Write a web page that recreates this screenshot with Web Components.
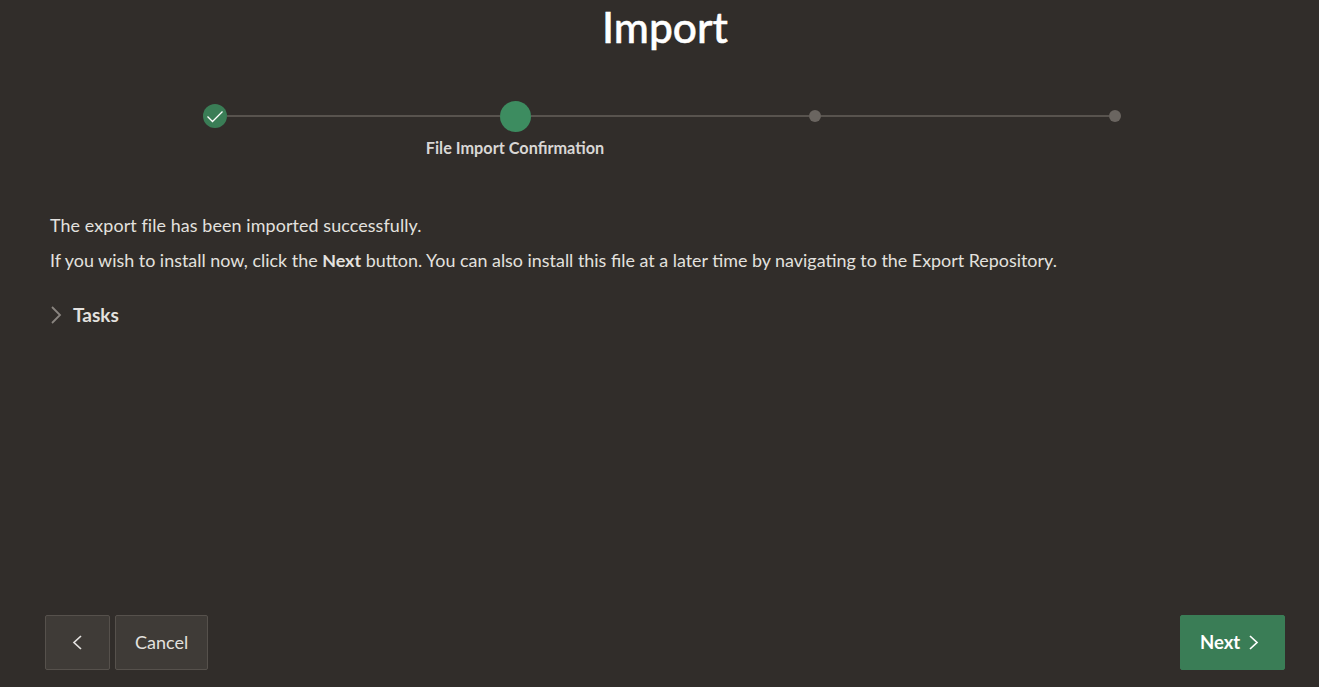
<!DOCTYPE html>
<html lang="en">
<head>
<meta charset="utf-8">
<title>Import</title>
<style>
  html, body { margin: 0; height: 100%; background: #312d2a; }
  body { font-family: Lato, "Noto Sans", sans-serif; color: #e3e1df; }
</style>
</head>
<body>
<import-page>
  <wizard-progress slot="progress"></wizard-progress>
  <p>The export file has been imported successfully.</p>
  <p>If you wish to install now, click the <b>Next</b> button. You can also install this file at a later time by navigating to the Export Repository.</p>
  <tasks-toggle slot="tasks">Tasks</tasks-toggle>
  <wizard-button slot="left" icon="prev" label="Back"></wizard-button>
  <wizard-button slot="left">Cancel</wizard-button>
  <wizard-button slot="right" hot icon="next">Next</wizard-button>
</import-page>
<script>
const pageTemplate = document.createElement('template')
pageTemplate.innerHTML = `
  <style>
    :host { display: flex; flex-direction: column; height: 687px; box-sizing: border-box; }
    h1 { margin: 0; padding-left: 11px; height: 56px; font-size: 42.5px; line-height: 54px; font-weight: 500; text-align: center; color: #fff; -webkit-text-stroke: 0.5px #fff; }
    #main { flex: 1; padding: 0 50px; }
    #text { margin-top: 50px; font-size: 17.9px; line-height: 35px; }
    ::slotted(p) { margin: 0; }
    ::slotted(p:first-of-type) { letter-spacing: 0.1px; }
    #footer { display: flex; justify-content: space-between; padding: 0 34px 17px 45px; }
    #footer div { display: flex; gap: 5px; }
  </style>
  <h1>Import</h1>
  <slot name="progress"></slot>
  <div id="main">
    <div id="text"><slot></slot></div>
    <slot name="tasks"></slot>
  </div>
  <div id="footer">
    <div><slot name="left"></slot></div>
    <div><slot name="right"></slot></div>
  </div>
`
customElements.define('import-page', class extends HTMLElement {
  constructor () {
    super()
    this.attachShadow({ mode: 'open' }).appendChild(pageTemplate.content.cloneNode(true))
  }
})

const progressTemplate = document.createElement('template')
progressTemplate.innerHTML = `
  <style>
    :host { display: grid; grid-template-columns: repeat(4, 300px); margin: 44px 0 0 65px; }
    .step { display: flex; flex-direction: column; align-items: stretch; }
    .track { display: flex; align-items: center; height: 32px; }
    .line { flex: 1; height: 2px; background: #58534e; }
    .step:first-of-type .line:first-child, .step:last-of-type .line:last-child { visibility: hidden; }
    .done { width: 24px; height: 24px; border-radius: 50%; background: #3a7d56; display: flex; align-items: center; justify-content: center; }
    .current { width: 31px; height: 31px; border-radius: 50%; background: #3d8c60; }
    .todo { width: 12px; height: 12px; border-radius: 50%; background: #6a6560; }
    .label { margin-top: 6px; height: 20px; text-align: center; font-size: 16.25px; line-height: 20px; font-weight: 700; color: #d9d7d5; }
  </style>
  <div class="step">
    <div class="track">
      <span class="line"></span>
      <span class="done">
        <svg width="18" height="18" viewBox="0 0 18 18" fill="none" stroke="#fff" stroke-width="1.3"><path d="M1.5 9.5l5 5 10-10"/></svg>
      </span>
      <span class="line"></span>
    </div>
  </div>
  <div class="step">
    <div class="track"><span class="line"></span><span class="current"></span><span class="line"></span></div>
    <div class="label">File Import Confirmation</div>
  </div>
  <div class="step">
    <div class="track"><span class="line"></span><span class="todo"></span><span class="line"></span></div>
  </div>
  <div class="step">
    <div class="track"><span class="line"></span><span class="todo"></span><span class="line"></span></div>
  </div>
`
customElements.define('wizard-progress', class extends HTMLElement {
  constructor () {
    super()
    this.attachShadow({ mode: 'open' }).appendChild(progressTemplate.content.cloneNode(true))
  }
})

const tasksTemplate = document.createElement('template')
tasksTemplate.innerHTML = `
  <style>
    :host { display: flex; align-items: center; gap: 10px; margin-top: 26px; height: 20px; font-size: 19px; font-weight: 700; color: #e3e1df; }
    svg { display: block; margin-top: 2px; }
  </style>
  <svg width="13" height="18" viewBox="0 0 13 18" fill="none" stroke="#8a8580" stroke-width="1.8"><path d="M2 1l8 8-8 8"/></svg>
  <slot></slot>
`
customElements.define('tasks-toggle', class extends HTMLElement {
  constructor () {
    super()
    this.attachShadow({ mode: 'open' }).appendChild(tasksTemplate.content.cloneNode(true))
  }
})

const buttonTemplate = document.createElement('template')
buttonTemplate.innerHTML = `
  <style>
    :host { display: block; }
    button { display: flex; align-items: center; gap: 7px; height: 55px; padding: 0 19px 2px; box-sizing: border-box; font: inherit; font-size: 18px; color: #e3e1df; background: #3f3b37; border: 1px solid #56514c; border-radius: 2px; }
    :host([hot]) button { width: 105px; gap: 8px; background: #3a7d56; border-color: #3a7d56; color: #fff; font-size: 18.5px; font-weight: 700; }
    svg { display: block; margin-top: 2px; }
  </style>
  <button type="button"><slot></slot></button>
`
customElements.define('wizard-button', class extends HTMLElement {
  constructor () {
    super()
    this.attachShadow({ mode: 'open' }).appendChild(buttonTemplate.content.cloneNode(true))
    const icon = this.getAttribute('icon')
    if (icon) {
      const d = icon === 'prev' ? 'M9 1L2 7.5 9 14' : 'M2 1l7 6.5L2 14'
      const button = this.shadowRoot.querySelector('button')
      button.insertAdjacentHTML('beforeend', `<svg width="11" height="15" viewBox="0 0 11 15" fill="none" stroke="currentColor" stroke-width="1.7"><path d="${d}"/></svg>`)
      if (icon === 'prev') {
        button.style.padding = '0 26px 2px'
        button.setAttribute('aria-label', this.getAttribute('label'))
      }
    }
  }
})
</script>
</body>
</html>
